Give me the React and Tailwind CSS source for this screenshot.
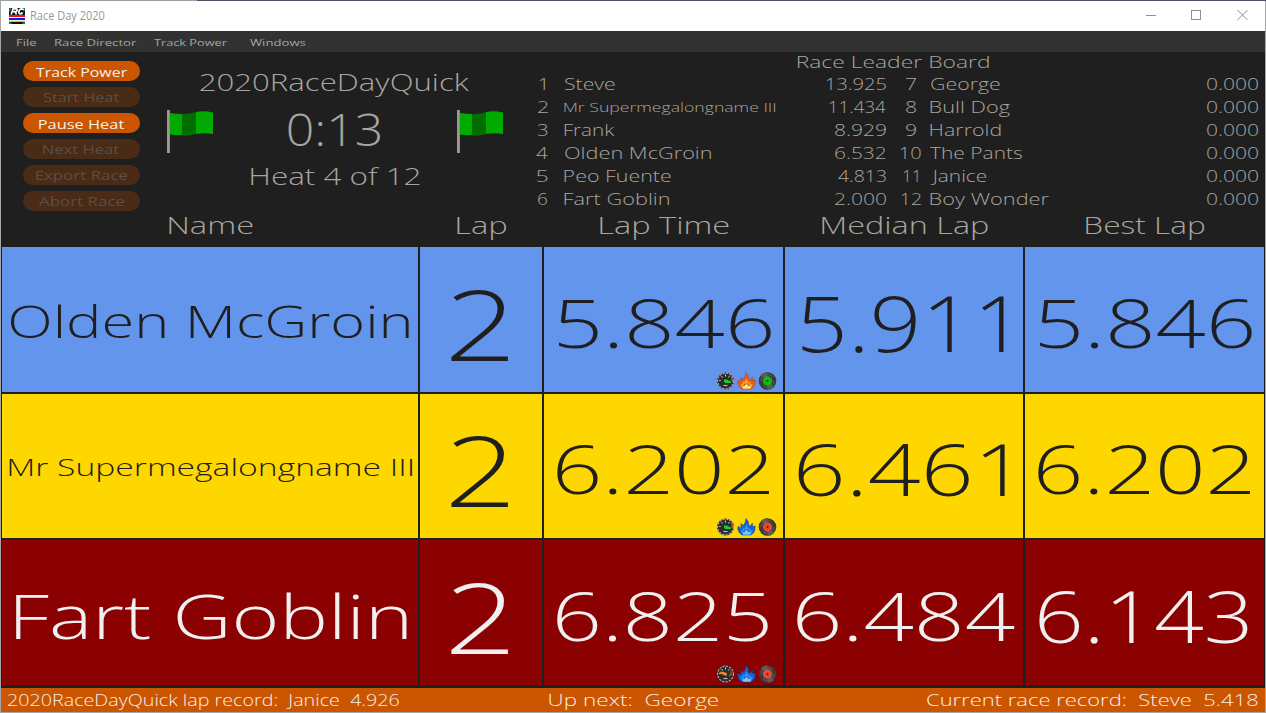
import React, { useLayoutEffect, useRef, useState } from "react";

// One line of text whose glyphs are stretched horizontally to fill `w` pixels.
function Fit({ w, className = "", children }) {
  const ref = useRef(null);
  const [t, setT] = useState({ s: 1, x: 0 });
  useLayoutEffect(() => {
    const cs = getComputedStyle(ref.current);
    const ctx = document.createElement("canvas").getContext("2d");
    ctx.font = `${cs.fontWeight} ${cs.fontSize} ${cs.fontFamily}`;
    const m = ctx.measureText(children);
    const s = w / (m.actualBoundingBoxLeft + m.actualBoundingBoxRight);
    setT({ s, x: m.actualBoundingBoxLeft * s });
  }, [w, children]);
  return (
    <div className={`shrink-0 whitespace-pre ${className}`} style={{ width: w }}>
      <span
        ref={ref}
        className="block w-max origin-left"
        style={{ transform: `translateX(${t.x}px) scaleX(${t.s})` }}
      >
        {children}
      </span>
    </div>
  );
}

const menu = [
  ["File", 20, "ml-[15px]"],
  ["Race Director", 82.5, "ml-[17.5px]"],
  ["Track Power", 73, "ml-[17.5px]"],
  ["Windows", 56.5, "ml-[23.5px]"],
];

const buttons = [
  ["Track Power", 91, true],
  ["Start Heat", 77, false],
  ["Pause Heat", 86, true],
  ["Next Heat", 77, false],
  ["Export Race", 92, false],
  ["Abort Race", 86, false],
];

const leaders = [
  [["1", 7], ["Steve", 51], ["13.925", 60], ["7", 11], ["George", 70]],
  [["2", 11], ["Mr Supermegalongname III", 211], ["11.434", 57], ["8", 11], ["Bull Dog", 80]],
  [["3", 10.5], ["Frank", 51], ["8.929", 52], ["9", 11], ["Harrold", 70.5]],
  [["4", 12], ["Olden McGroin", 147], ["6.532", 51.5], ["10", 20.5], ["The Pants", 92.5]],
  [["5", 10.5], ["Peo Fuente", 107], ["4.813", 48], ["11", 15.5], ["Janice", 56.5]],
  [["6", 11], ["Fart Goblin", 105], ["2.000", 52], ["12", 20], ["Boy Wonder", 119]],
];

const lanes = [
  {
    color: "bg-[#6495ed] text-[#1f1f1f]",
    cells: [
      ["Olden McGroin", 400, "pl-[8px] text-[43.5px]"],
      ["2", 58, "pl-[31px] text-[98px]"],
      ["5.846", 213, "pl-[13.5px] text-[67px]"],
      ["5.911", 202, "pl-[16.5px] text-[77px]"],
      ["5.846", 213, "pl-[13.5px] text-[67px]"],
    ],
    icons: ["green", "orange", "green"],
  },
  {
    color: "bg-[#ffd700] text-[#1f1f1f]",
    cells: [
      ["Mr Supermegalongname III", 403.5, "pl-[6.5px] text-[23.5px]"],
      ["2", 58, "pl-[31px] text-[98px]"],
      ["6.202", 212.5, "pl-[12.5px] text-[67px]"],
      ["6.461", 207, "pl-[12.5px] text-[71px]"],
      ["6.202", 212.5, "pl-[12.5px] text-[67px]"],
    ],
    icons: ["green", "blue", "red"],
  },
  {
    color: "bg-[#8b0000] text-[#f0f0f0]",
    cells: [
      ["Fart Goblin", 390.5, "pl-[13.5px] text-[61px]"],
      ["2", 58, "pl-[31px] text-[98px]"],
      ["6.825", 212, "pl-[12.5px] text-[67px]"],
      ["6.484", 218, "pl-[12px] text-[67px]"],
      ["6.143", 209, "pl-[13.5px] text-[71px]"],
    ],
    icons: ["orange", "blue", "red"],
  },
];

function AppIcon() {
  return (
    <svg width="16" height="16" viewBox="0 0 16 16">
      <rect width="16" height="16" rx="1" fill="#101410" />
      <path d="M0 0h2.500L1 4H0zM14 0h2v3h-1.500z" fill="#1c7a45" />
      <path
        d="M2.200 6.500L4 0.800H7.200Q8.600 1 8 2.600Q7.700 3.600 6.600 3.900L7.300 6.500M3.500 3.700H6.500"
        fill="none"
        stroke="#fff"
        strokeWidth="1.700"
      />
      <path d="M14.300 2.300Q14.200 0.900 12.600 0.900Q10.400 1 9.900 3.500Q9.600 5.800 11.500 5.800Q13 5.700 13.500 4.400" fill="none" stroke="#fff" strokeWidth="1.700" />
      <rect y="7" width="16" height="2" fill="#f01414" />
      <rect y="9" width="16" height="1" fill="#fff" />
      <rect y="10" width="16" height="2" fill="#1616e0" />
      <rect y="12" width="16" height="1" fill="#f0f0c0" />
      <rect y="13" width="16" height="1" fill="#d8c400" />
      <path d="M0 14h2l1 2H0zM16 14h-2l-1 2h3z" fill="#2b6a42" />
    </svg>
  );
}

function Flag() {
  return (
    <svg width="47" height="43" viewBox="0 0 47 43">
      <rect x="0" y="0" width="3" height="43" fill="#8f8a82" />
      <rect x="0.5" y="0" width="1" height="43" fill="#a9a49c" />
      <path d="M3 3Q9 4 15 4V25Q9 25.5 3 24.5Z" fill="#00aa00" />
      <path d="M15 4Q22 4.5 29 2V24Q22 26.500 15 25.500Z" fill="#006e00" />
      <path d="M29 2Q37 0.500 46 2.500V24Q37 22.500 29 24Z" fill="#00aa00" />
    </svg>
  );
}

function Gauge({ kind }) {
  return (
    <svg width="19" height="18" viewBox="0 0 19 18">
      <circle cx="9.5" cy="9" r="8.6" fill="#2c2c2c" />
      <circle cx="9.5" cy="9" r="7.9" fill="none" stroke="#a8a8a8" strokeWidth="1.2" strokeDasharray="2.2 1.2" />
      <path d="M9.500 2.500v2M5.500 4l1 1.500M13.500 4l-1 1.500M3.200 8.500h1.500" stroke="#ddd" strokeWidth="0.900" />
      <path d="M7.500 13.500h4" stroke="#b8b8b8" strokeWidth="1.200" />
      {kind === "green" ? (
        <>
          <path d="M8 7.500h2.500l4.500 2v1.500H9.500L8 10z" fill="#14d32c" />
          <path d="M16 5v4.500" stroke="#e05a20" strokeWidth="1.300" />
        </>
      ) : (
        <>
          <path d="M3.500 6.800h4l3.500 1.400V10.500H8.500L3.500 8z" fill="#f5822a" />
          <path d="M13 11l2-2V6" stroke="#c8501c" strokeWidth="1.200" fill="none" />
        </>
      )}
    </svg>
  );
}

function Flame({ kind }) {
  const hot = kind === "orange";
  return (
    <svg width="19" height="18" viewBox="0 0 19 18">
      <path
        d="M5 17L2 14.500L0.600 10.500L1.300 8L3 10L4.200 8.500L3.800 5.500L6 7.500L8 5L9 0.600L11.200 3.500L11.800 7.500L13.500 8L15.300 5L15.500 8.500L18.200 8L17.800 12.500L16.500 15L14 17Z"
        fill={hot ? "#ea5c14" : "#1262d4"}
        stroke={hot ? "#a83c10" : "#0a3f96"}
        strokeWidth="0.500"
      />
      <path
        d="M5 16L3.500 12.500L5.300 12L5.500 9.500L7.500 10L9.500 6.500L11.500 10L13.500 10.500L13.800 12.500L15.800 12L14.500 16Z"
        fill={hot ? "#ff9a2c" : "#2e8cf4"}
      />
      <path
        d="M6 16.700V13L8 12.500L9 11L11 12.500L13.500 13V16.700Z"
        fill={hot ? "#ffdf7e" : "#6cc8ff"}
      />
      <path d="M6 13.500h1.500V12h4v1.500h1.500" fill="none" stroke={hot ? "#7a4210" : "#123f7c"} strokeWidth="0.700" />
    </svg>
  );
}

function Disc({ kind }) {
  return (
    <svg width="19" height="18" viewBox="0 0 19 18">
      <circle cx="9.5" cy="9" r="8.800" fill="#3a3a3a" />
      <path d="M9.500 9L3 3A8.800 8.800 0 0 1 9.500 0.200ZM9.500 9L16 15A8.800 8.800 0 0 1 9.500 17.800Z" fill="#5c5c5c" />
      <circle cx="9.500" cy="9" r="6.500" fill="none" stroke="#777" strokeWidth="0.600" strokeDasharray="5 5" />
      <circle cx="9.500" cy="9" r="4.700" fill={kind === "green" ? "#0cba14" : "#e8472c"} />
      <circle cx="9.500" cy="9" r="0.900" fill="#222" />
    </svg>
  );
}

export default function App() {
  return (
    <div className="flex h-[713px] w-[1266px] flex-col overflow-hidden bg-[#a6a6a6] pb-px font-['Open_Sans','Noto_Sans',sans-serif] font-light">
      <div className="flex h-px shrink-0">
        <div className="w-[197px] bg-[#a0a0a0]" />
        <div className="flex-1 bg-[#504d66]" />
      </div>
      <div className="mx-px flex flex-1 flex-col bg-[#1f1f1f] text-[#a9a59e]">
        {/* Title bar */}
        <div className="flex h-[30px] items-center bg-white pl-2 font-normal text-[#999]">
          <div className="-mt-px"><AppIcon /></div>
          <Fit w={74} className="ml-[6px] text-[12px] leading-[30px]">Race Day 2020</Fit>
          <svg className="-mt-[2px] mr-[15px] ml-auto" width="104" height="12" viewBox="0 0 104 12" fill="none" stroke="#909090">
            <path d="M0 6.500h10" />
            <rect x="45.500" y="1.500" width="9" height="9" />
            <path d="M91.500 1l10 10M101.500 1l-10 10" />
          </svg>
        </div>

        {/* Menu */}
        <div className="flex h-[21px] bg-[#323232] font-normal">
          {menu.map(([label, w, ml]) => (
            <Fit key={label} w={w} className={`${ml} text-[9.5px] leading-[23px]`}>{label}</Fit>
          ))}
        </div>

        <div className="flex h-[157px]">
          <div className="flex flex-col gap-[6px] pt-[9px] pl-[22px]">
            {buttons.map(([label, w, on]) => (
              <div
                key={label}
                className={`flex h-5 w-[117px] justify-center rounded-full font-normal ${
                  on ? "bg-[#cc5500] text-[#f0f0f0]" : "bg-[#4a2b15] text-[#57504a]"
                }`}
              >
                <Fit w={w} className={on ? "text-[12.5px] leading-[23px]" : "text-[12.5px] leading-[22px]"}>{label}</Fit>
              </div>
            ))}
          </div>

          <div className="ml-5 flex w-[350px] flex-col items-center pt-[16px]">
            <Fit w={270} className="text-[23px] leading-[28px]">2020RaceDayQuick</Fit>
            <div className="mt-[10px] flex h-[50px] w-full items-start justify-between pr-[6px] pl-[7px]">
              <div className="pt-1"><Flag /></div>
              <Fit w={93} className="mr-[3px] text-[44px] leading-[46px]">0:13</Fit>
              <div className="pt-1"><Flag /></div>
            </div>
            <Fit w={169} className="mt-[6px] text-[23px] leading-[28px]">Heat 4 of 12</Fit>
          </div>

          <div className="flex flex-1 flex-col">
            <Fit w={192} className="ml-[286.500px] text-[17px] leading-[19px]">Race Leader Board</Fit>
            {leaders.map(([rank, name, pts, rank2, name2]) => (
              <div key={rank[0]} className="flex h-[23px] text-[15.5px] leading-[26px]">
                <div className="ml-4 flex w-8 justify-center">
                  <Fit w={rank[1]}>{rank[0]}</Fit>
                </div>
                <div className="ml-[6px] flex w-[321.500px] justify-between">
                  <Fit w={name[1]} className={name[1] > 200 ? "text-[13px]" : ""}>{name[0]}</Fit>
                  <Fit w={pts[1]}>{pts[0]}</Fit>
                </div>
                <div className="ml-[8.500px] flex w-[33px] justify-center">
                  <Fit w={rank2[1]}>{rank2[0]}</Fit>
                </div>
                <div className="ml-[3px] flex w-[328px] justify-between">
                  <Fit w={name2[1]}>{name2[0]}</Fit>
                  <Fit w={52}>0.000</Fit>
                </div>
              </div>
            ))}
          </div>
        </div>

        {/* Column headings */}
        <div className="grid h-[38px] grid-cols-[416px_122px_239px_238px_239px] justify-items-center gap-x-[2px] pl-[2px] text-[23.500px] leading-[33px]">
          <Fit w={84}>Name</Fit>
          <Fit w={49.5}>Lap</Fit>
          <Fit w={129}>Lap Time</Fit>
          <Fit w={166}>Median Lap</Fit>
          <Fit w={118.5}>Best Lap</Fit>
        </div>

        {/* Lanes */}
        <div className="grid h-[438px] grid-cols-[416px_122px_239px_238px_239px] grid-rows-[145px_144px_145px] gap-[2px] pl-px">
          {lanes.map((lane, r) =>
            lane.cells.map(([text, w, cls], c) => (
              <div key={`${r}-${c}`} className={`relative flex items-center pt-[2px] leading-none ${lane.color} ${cls}`}>
                <Fit w={w} className="pt-[0.050em]">{text}</Fit>
                {c === 2 && (
                  <div className="absolute right-[6px] bottom-[2px] flex gap-[2px]">
                    <Gauge kind={lane.icons[0]} />
                    <Flame kind={lane.icons[1]} />
                    <Disc kind={lane.icons[2]} />
                  </div>
                )}
              </div>
            ))
          )}
        </div>

        {/* Status bar */}
        <div className="mt-[3px] flex h-6 bg-[#cc5500] text-[15.500px] leading-[25px] text-[#f0f0f0]">
          <Fit w={393} className="ml-[6px]">2020RaceDayQuick lap record:  Janice  4.926</Fit>
          <Fit w={169.5} className="ml-[148.500px]">Up next:  George</Fit>
          <Fit w={331.5} className="mr-[7.500px] ml-auto">Current race record:  Steve  5.418</Fit>
        </div>
      </div>
    </div>
  );
}
